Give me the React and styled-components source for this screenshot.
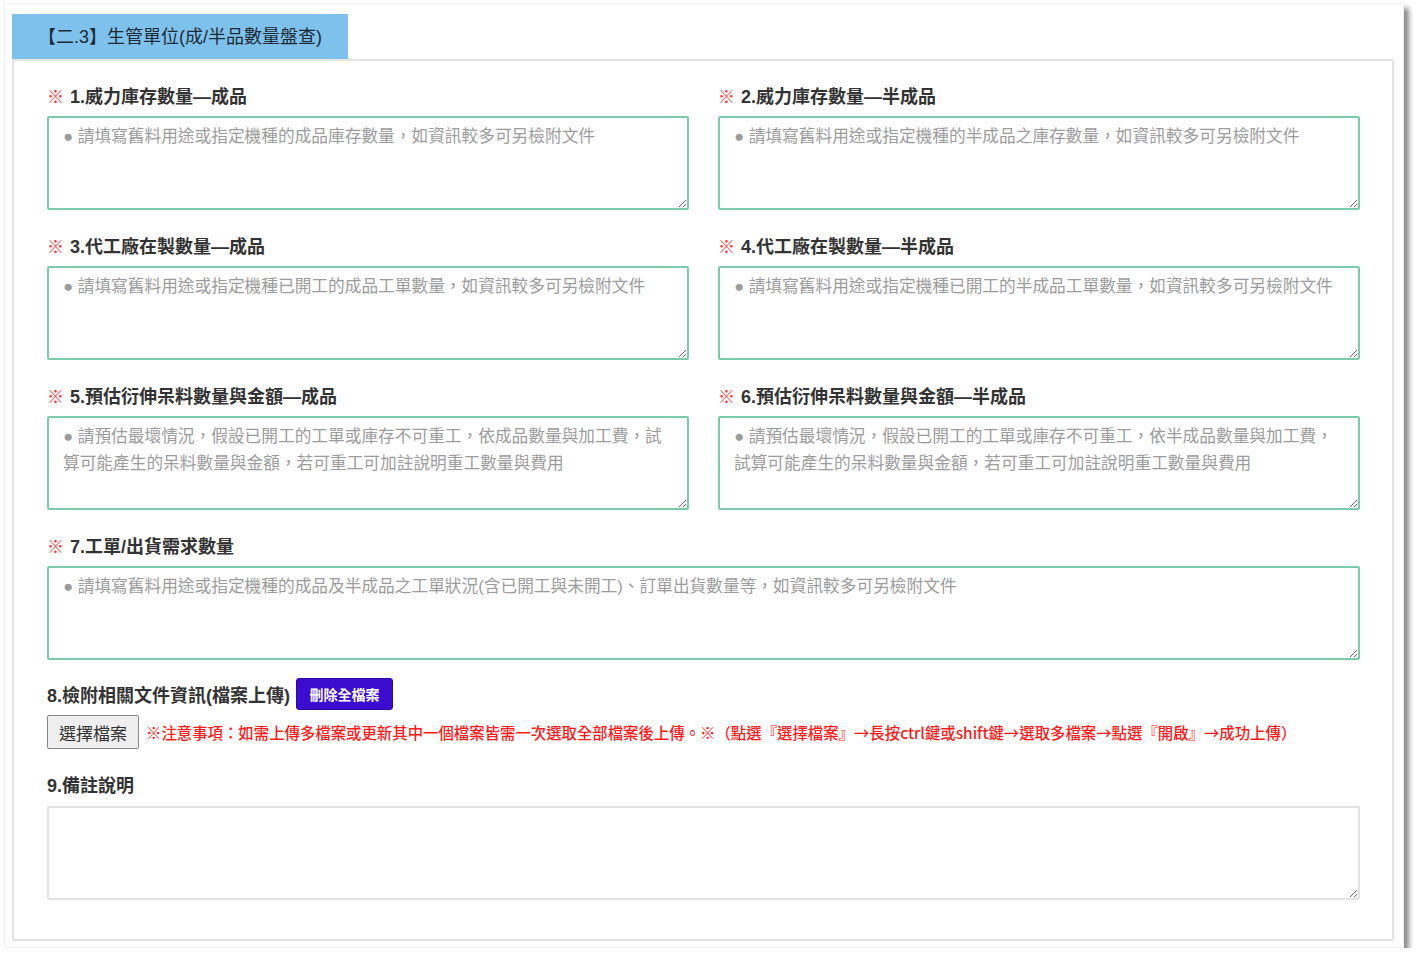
import React from 'react';
import styled, { createGlobalStyle } from 'styled-components';

const GlobalStyle = createGlobalStyle`
  body {
    margin: 0;
    background: #fff;
    font-family: "Liberation Sans", "Noto Sans CJK TC", sans-serif;
  }
`

const Frame = styled.div`
  padding: 3px 0 0 4px;
`

const Card = styled.div`
  width: 1400px;
  box-sizing: border-box;
  padding: 10px 9px 6px 7px;
  background: #fff;
  border: 1px solid #f2f2f2;
  box-shadow: 5px 5px 5px rgba(0, 0, 0, 0.45);
`

const Tab = styled.div`
  width: 336px;
  height: 45px;
  box-sizing: border-box;
  padding: 0 0 3px 26px;
  display: flex;
  align-items: center;
  background: #7dc1ec;
  color: #1e2a36;
  font-size: 18px;
`

const Panel = styled.div`
  border: 2px solid #e4e4e4;
  padding: 22px 32px 39px 33px;
`

const Grid = styled.div`
  display: grid;
  grid-template-columns: 1fr 1fr;
  column-gap: 29px;
  row-gap: 23px;
`

const Field = styled.div`
  display: flex;
  flex-direction: column;
  gap: 9px;
  grid-column: ${(p) => (p.$full ? '1 / -1' : 'auto')};
`

const Label = styled.div`
  height: 24px;
  display: flex;
  align-items: center;
  gap: 6px;
  font-size: 18px;
  font-weight: bold;
  color: #333;
`

const Mark = styled.span`
  color: #f33;
  font-weight: normal;
  font-size: 17px;
`

const Area = styled.textarea`
  display: block;
  height: 94px;
  box-sizing: border-box;
  margin: 0;
  padding: 5px 14px 3px;
  border: 2px solid ${(p) => (p.$plain ? '#e2e2e2' : '#79cbaa')};
  border-radius: 2px;
  font-family: "Liberation Sans", "Noto Sans CJK TC", sans-serif;
  font-size: 16.7px;
  line-height: 27px;
  color: #333;
  outline: none;

  &::placeholder {
    color: #9c9c9c;
  }
`

const UploadHead = styled.div`
  margin-top: 18px;
  display: flex;
  align-items: center;
  gap: 6px;
`

const DangerButton = styled.button`
  height: 32px;
  width: 97px;
  padding: 0;
  border: 1px solid #2a0a9a;
  border-radius: 3px;
  background: #3b0bd0;
  color: #fff;
  font-family: "Liberation Sans", "Noto Sans CJK TC", sans-serif;
  font-size: 14px;
  font-weight: bold;
`

const FileRow = styled.div`
  margin-top: 5px;
  display: flex;
  align-items: center;
  gap: 7px;
`

const FileButton = styled.button`
  width: 92px;
  height: 34px;
  padding: 0;
  border: 1px solid #8a8a8a;
  border-radius: 2px;
  background: #efefef;
  color: #333;
  font-family: "Liberation Sans", "Noto Sans CJK TC", sans-serif;
  font-size: 17px;
`

const Note = styled.span`
  color: #ff1a1a;
  font-family: "Noto Sans CJK TC", sans-serif;
  font-size: 15.4px;
  font-weight: 500;
  white-space: nowrap;
`

const Remark = styled(Field)`
  margin-top: 23px;
  gap: 10px;
`

const fields = [
  { title: '1.威力庫存數量—成品', hint: '請填寫舊料用途或指定機種的成品庫存數量，如資訊較多可另檢附文件' },
  { title: '2.威力庫存數量—半成品', hint: '請填寫舊料用途或指定機種的半成品之庫存數量，如資訊較多可另檢附文件' },
  { title: '3.代工廠在製數量—成品', hint: '請填寫舊料用途或指定機種已開工的成品工單數量，如資訊較多可另檢附文件' },
  { title: '4.代工廠在製數量—半成品', hint: '請填寫舊料用途或指定機種已開工的半成品工單數量，如資訊較多可另檢附文件' },
  { title: '5.預估衍伸呆料數量與金額—成品', hint: '請預估最壞情況，假設已開工的工單或庫存不可重工，依成品數量與加工費，試算可能產生的呆料數量與金額，若可重工可加註說明重工數量與費用' },
  { title: '6.預估衍伸呆料數量與金額—半成品', hint: '請預估最壞情況，假設已開工的工單或庫存不可重工，依半成品數量與加工費，試算可能產生的呆料數量與金額，若可重工可加註說明重工數量與費用' },
  { title: '7.工單/出貨需求數量', hint: '請填寫舊料用途或指定機種的成品及半成品之工單狀況(含已開工與未開工)、訂單出貨數量等，如資訊較多可另檢附文件', full: true },
]

const App = () => {
  return (
    <Frame>
      <GlobalStyle />
      <Card>
        <Tab>【二.3】生管單位(成/半品數量盤查)</Tab>
        <Panel>
          <Grid>
            {fields.map((f) => (
              <Field key={f.title} $full={f.full}>
                <Label><Mark>※</Mark>{f.title}</Label>
                <Area placeholder={'● ' + f.hint} />
              </Field>
            ))}
          </Grid>
          <UploadHead>
            <Label>8.檢附相關文件資訊(檔案上傳)</Label>
            <DangerButton>刪除全檔案</DangerButton>
          </UploadHead>
          <FileRow>
            <FileButton>選擇檔案</FileButton>
            <Note>※注意事項：如需上傳多檔案或更新其中一個檔案皆需一次選取全部檔案後上傳。※（點選『選擇檔案』→長按ctrl鍵或shift鍵→選取多檔案→點選『開啟』→成功上傳）</Note>
          </FileRow>
          <Remark>
            <Label>9.備註說明</Label>
            <Area $plain />
          </Remark>
        </Panel>
      </Card>
    </Frame>
  );
}

export default App
